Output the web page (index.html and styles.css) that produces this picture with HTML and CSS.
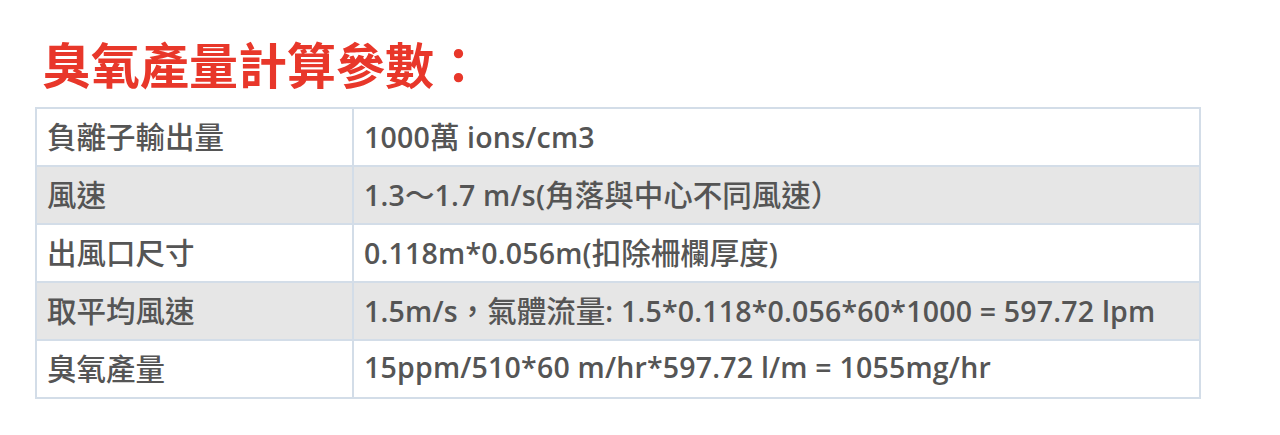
FILE: index.html
```html
<!DOCTYPE html>
<html lang="zh-Hant">
<head>
<meta charset="utf-8">
<link rel="stylesheet" href="styles.css">
</head>
<body>
<div class="page">
  <h2 class="title">臭氧產量計算參數：</h2>
  <table class="params">
    <tr><td class="k">負離子輸出量</td><td>1000<span class="c">萬</span> ions/cm3</td></tr>
    <tr class="alt"><td class="k">風速</td><td>1.3<span class="c">～</span>1.7 m/s(<span class="c">角落與中心不同風速）</span></td></tr>
    <tr><td class="k">出風口尺寸</td><td>0.118m*0.056m(<span class="c">扣除柵欄厚度</span>)</td></tr>
    <tr class="alt"><td class="k">取平均風速</td><td>1.5m/s<span class="c">，氣體流量</span>: 1.5*0.118*0.056*60*1000 = 597.72 lpm</td></tr>
    <tr><td class="k">臭氧產量</td><td>15ppm/510*60 m/hr*597.72 l/m = 1055mg/hr</td></tr>
  </table>
</div>
</body>
</html>
```

FILE: styles.css
```css
html, body {
  margin: 0;
  padding: 0;
  background: #ffffff;
}
.page {
  padding: 36px 0 0 35px;
}
.title {
  margin: 0 0 0 7px;
  font-family: "Noto Sans CJK TC", "Noto Sans", sans-serif;
  font-weight: 700;
  font-size: 49px;
  line-height: 54px;
  color: #e8372a;
  height: 71px;
}
.params {
  border-collapse: collapse;
  width: 1166px;
  font-family: "Open Sans", "Noto Sans CJK TC", sans-serif;
  font-size: 28.5px;
  letter-spacing: 0.2px;
  font-weight: 600;
  color: #555555;
}
.params td {
  border: 2px solid #d3dde8;
  height: 58px;
  padding: 0 0 4px 10px;
  vertical-align: middle;
  box-sizing: border-box;
}
.params td.k {
  width: 317px;
  font-family: "Noto Sans CJK TC", sans-serif;
  font-size: 29.5px;
  letter-spacing: 0;
  font-weight: 500;
}
.params .c {
  font-family: "Noto Sans CJK TC", sans-serif;
  font-size: 29.5px;
  letter-spacing: 0;
  font-weight: 500;
}
.params tr.alt td {
  background: #e6e6e6;
}
```
